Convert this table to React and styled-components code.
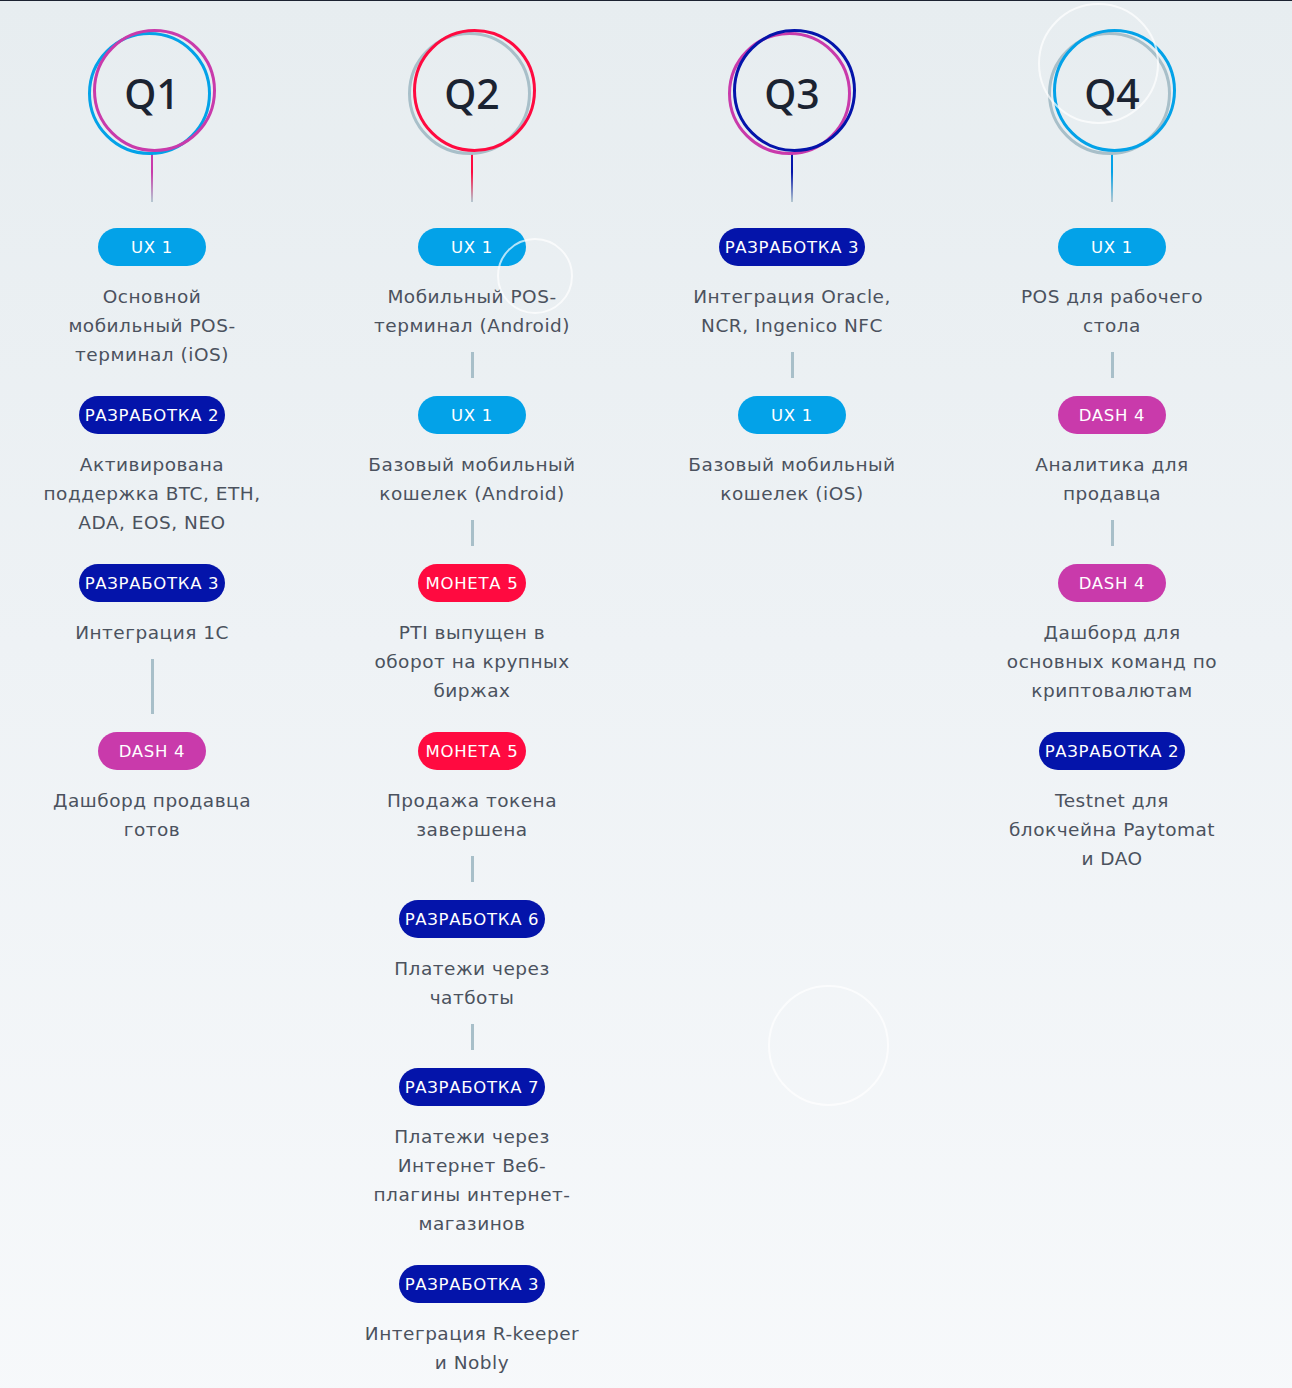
import React from "react";
import styled, { createGlobalStyle } from "styled-components";

const Global = createGlobalStyle`
  html, body { margin: 0; padding: 0; }
  body { font-family: "DejaVu Sans", "Noto Sans", sans-serif; }
  * { box-sizing: border-box; }
`;

const COLORS = {
  ux: "#03a2e8",
  dev: "#0414aa",
  coin: "#ff0a40",
  dash: "#c93aab",
  grey: "#a8bfc9",
};

const Page = styled.div`
  position: relative;
  min-height: 1388px;
  border-top: 1px solid #1b2231;
  background: linear-gradient(180deg, #e7edf0 0%, #eef2f5 45%, #f7f9fb 100%);
  overflow: hidden;
`;

const Grid = styled.div`
  display: grid;
  grid-template-columns: repeat(4, 304px);
  column-gap: 16px;
  align-items: start;
  padding-top: 28px;
`;

const Column = styled.div`
  display: flex;
  flex-direction: column;
  align-items: center;
`;

const Rings = styled.div`
  position: relative;
  width: 128px;
  height: 126px;
  display: flex;
  align-items: center;
  justify-content: center;
`;

const Ring = styled.span`
  position: absolute;
  width: 123px;
  height: 123px;
  border-radius: 50%;
  border: 3px solid ${(p) => p.$color};
  left: ${(p) => (p.$front ? 5 : 0)}px;
  top: ${(p) => (p.$front ? 0 : 3)}px;
`;

const QLabel = styled.span`
  position: relative;
  top: 1px;
  font-family: "Noto Sans", sans-serif;
  font-size: 41px;
  font-weight: 500;
  color: #1b2331;
  line-height: 1;
`;

const Stem = styled.div`
  width: 2px;
  height: 50px;
  margin-top: -3px;
  margin-bottom: 26px;
  background: linear-gradient(180deg, ${(p) => p.$color} 0%, ${(p) => p.$color} 40%, rgba(168, 191, 201, 0.8) 100%);
`;

const Item = styled.div`
  display: flex;
  flex-direction: column;
  align-items: center;
  min-height: 168px;
`;

const Badge = styled.div`
  height: 38px;
  min-width: 108px;
  padding: 0 6px;
  border-radius: 19px;
  background: ${(p) => COLORS[p.$kind]};
  color: #fff;
  font-size: 16.5px;
  letter-spacing: 0.7px;
  font-weight: 400;
  display: flex;
  align-items: center;
  justify-content: center;
  white-space: nowrap;
`;

const Text = styled.p`
  margin: 16px 0 0;
  padding-bottom: ${(p) => (p.$link ? 0 : 27)}px;
  width: 280px;
  text-align: center;
  font-size: 18.5px;
  letter-spacing: 0.5px;
  line-height: 29px;
  color: #4b525e;
`;

const Link = styled.div`
  flex: 1;
  width: 3px;
  margin: 12px 0 18px;
  background: #a8bfc9;
`;

const Deco = styled.span`
  position: absolute;
  border-radius: 50%;
  border: 2.5px solid rgba(255, 255, 255, 0.7);
  pointer-events: none;
  left: ${(p) => p.$x - p.$d / 2}px;
  top: ${(p) => p.$y - p.$d / 2}px;
  width: ${(p) => p.$d}px;
  height: ${(p) => p.$d}px;
`;

const quarters = [
  {
    q: "Q1",
    back: COLORS.ux,
    front: COLORS.dash,
    items: [
      ["ux", "UX 1", ["Основной", "мобильный POS-", "терминал (iOS)"]],
      ["dev", "РАЗРАБОТКА 2", ["Активирована", "поддержка BTC, ETH,", "ADA, EOS, NEO"]],
      ["dev", "РАЗРАБОТКА 3", ["Интеграция 1С"]],
      ["dash", "DASH 4", ["Дашборд продавца", "готов"]],
    ],
  },
  {
    q: "Q2",
    back: COLORS.grey,
    front: COLORS.coin,
    items: [
      ["ux", "UX 1", ["Мобильный POS-", "терминал (Android)"]],
      ["ux", "UX 1", ["Базовый мобильный", "кошелек (Android)"]],
      ["coin", "МОНЕТА 5", ["PTI выпущен в", "оборот на крупных", "биржах"]],
      ["coin", "МОНЕТА 5", ["Продажа токена", "завершена"]],
      ["dev", "РАЗРАБОТКА 6", ["Платежи через", "чатботы"]],
      ["dev", "РАЗРАБОТКА 7", ["Платежи через", "Интернет Веб-", "плагины интернет-", "магазинов"]],
      ["dev", "РАЗРАБОТКА 3", ["Интеграция R-keeper", "и Nobly"]],
    ],
  },
  {
    q: "Q3",
    back: COLORS.dash,
    front: COLORS.dev,
    items: [
      ["dev", "РАЗРАБОТКА 3", ["Интеграция Oracle,", "NCR, Ingenico NFC"]],
      ["ux", "UX 1", ["Базовый мобильный", "кошелек (iOS)"]],
    ],
  },
  {
    q: "Q4",
    back: COLORS.grey,
    front: COLORS.ux,
    items: [
      ["ux", "UX 1", ["POS для рабочего", "стола"]],
      ["dash", "DASH 4", ["Аналитика для", "продавца"]],
      ["dash", "DASH 4", ["Дашборд для", "основных команд по", "криптовалютам"]],
      ["dev", "РАЗРАБОТКА 2", ["Testnet для", "блокчейна Paytomat", "и DAO"]],
    ],
  },
];

export default function App() {
  return (
    <Page>
      <Global />
      <Grid>
        {quarters.map((col) => (
          <Column key={col.q}>
            <Rings>
              <Ring $color={col.back} />
              <Ring $color={col.front} $front />
              <QLabel>{col.q}</QLabel>
            </Rings>
            <Stem $color={col.front} />
            {col.items.map(([kind, label, lines], i) => {
              const last = i === col.items.length - 1;
              const link = !last && lines.length < 3;
              return (
                <Item key={i}>
                  <Badge $kind={kind}>{label}</Badge>
                  <Text $link={link}>
                    {lines.map((l, j) => (
                      <React.Fragment key={j}>
                        {j > 0 && <br />}
                        {l}
                      </React.Fragment>
                    ))}
                  </Text>
                  {link && <Link />}
                </Item>
              );
            })}
          </Column>
        ))}
      </Grid>
      <Deco $x={1098} $y={62} $d={121} />
      <Deco $x={535} $y={275} $d={76} />
      <Deco $x={828} $y={1044} $d={121} />
    </Page>
  );
}
